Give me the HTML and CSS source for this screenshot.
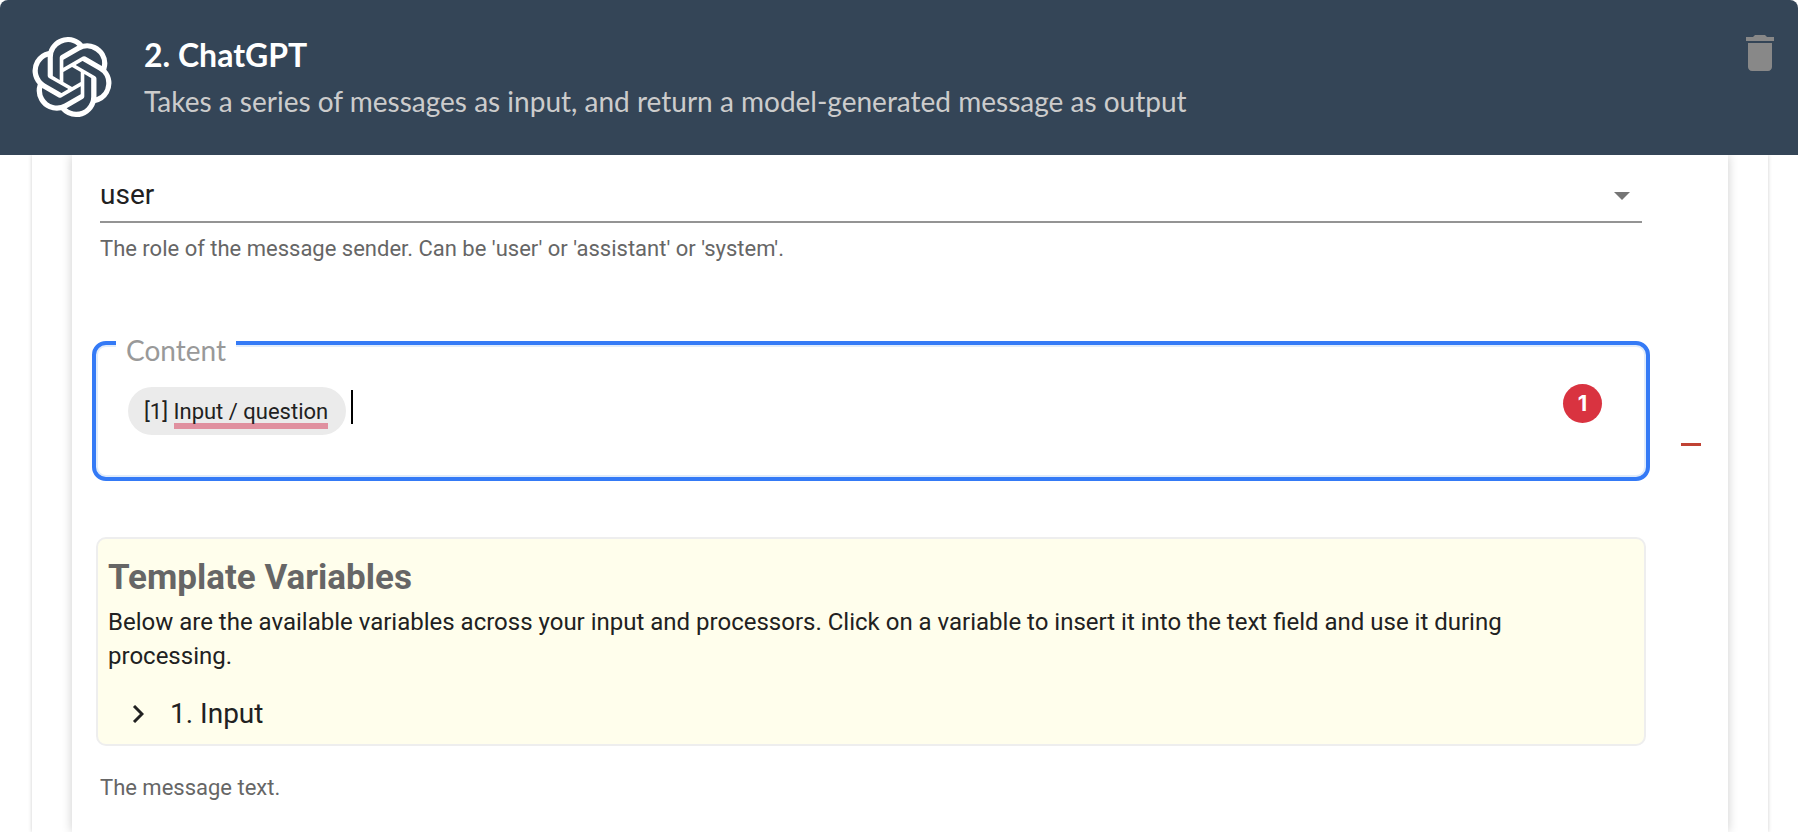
FILE: index.html
```html
<!DOCTYPE html>
<html lang="en">
<head>
<meta charset="utf-8">
<meta name="viewport" content="width=device-width, initial-scale=1">
<title>2. ChatGPT</title>
<link rel="stylesheet" href="styles.css">
</head>
<body>
<header class="step-header">
  <svg class="logo" viewBox="0 0 24 24" aria-hidden="true"><path fill="currentColor" d="M22.2819 9.8211a5.9847 5.9847 0 0 0-.5157-4.9108 6.0462 6.0462 0 0 0-6.5098-2.9A6.0651 6.0651 0 0 0 4.9807 4.1818a5.9847 5.9847 0 0 0-3.9977 2.9 6.0462 6.0462 0 0 0 .7427 7.0966 5.98 5.98 0 0 0 .511 4.9107 6.051 6.051 0 0 0 6.5146 2.9001A5.9847 5.9847 0 0 0 13.2599 24a6.0557 6.0557 0 0 0 5.7718-4.2058 5.9894 5.9894 0 0 0 3.9977-2.9001 6.0557 6.0557 0 0 0-.7475-7.0729zm-9.022 12.6081a4.4755 4.4755 0 0 1-2.8764-1.0408l.1419-.0804 4.7783-2.7582a.7948.7948 0 0 0 .3927-.6813v-6.7369l2.02 1.1686a.071.071 0 0 1 .038.0615v5.5826a4.504 4.504 0 0 1-4.4945 4.4944zm-9.6607-4.1254a4.4708 4.4708 0 0 1-.5346-3.0137l.142.0852 4.783 2.7582a.7712.7712 0 0 0 .7806 0l5.8428-3.3685v2.3324a.0804.0804 0 0 1-.0332.0615L9.74 19.9502a4.4992 4.4992 0 0 1-6.1408-1.6464zM2.3408 7.8956a4.485 4.485 0 0 1 2.3655-1.9728V11.6a.7664.7664 0 0 0 .3879.6765l5.8144 3.3543-2.0201 1.1685a.0757.0757 0 0 1-.071 0l-4.8303-2.7865A4.504 4.504 0 0 1 2.3408 7.872zm16.5963 3.8558L13.1038 8.364 15.1192 7.2a.0757.0757 0 0 1 .071 0l4.8303 2.7913a4.4944 4.4944 0 0 1-.6765 8.1042v-5.6772a.79.79 0 0 0-.407-.667zm2.0107-3.0231l-.142-.0852-4.7735-2.7818a.7759.7759 0 0 0-.7854 0L9.409 9.2297V6.8974a.0662.0662 0 0 1 .0284-.0615l4.8303-2.7866a4.4992 4.4992 0 0 1 6.6802 4.66zM8.3065 12.863l-2.02-1.1638a.0804.0804 0 0 1-.038-.0567V6.0742a4.4992 4.4992 0 0 1 7.3757-3.4537l-.142.0805L8.704 5.459a.7948.7948 0 0 0-.3927.6813zm1.0976-2.3654l2.602-1.4998 2.6069 1.4998v2.9994l-2.5974 1.4997-2.6067-1.4997Z"/></svg>
  <div class="heading">
    <h1 class="title">2. ChatGPT</h1>
    <p class="subtitle">Takes a series of messages as input, and return a model-generated message as output</p>
  </div>
  <button class="icon-button delete" type="button" aria-label="Delete step">
    <svg class="delete-icon" viewBox="5 3 14 18" aria-hidden="true"><path fill="currentColor" d="M6 19c0 1.1.9 2 2 2h8c1.1 0 2-.9 2-2V7H6v12zM19 4h-3.500l-1-1h-5l-1 1H5v2h14V4z"/></svg>
  </button>
</header>

<main class="outer-panel">
  <section class="inner-panel">
    <div class="fields">
      <div class="role-field">
        <div class="select-wrap">
          <select class="role-select" aria-label="Role" aria-describedby="role-help">
            <option selected>user</option>
            <option>assistant</option>
            <option>system</option>
          </select>
          <svg class="select-arrow" viewBox="0 0 16 8" aria-hidden="true"><path fill="currentColor" d="M0 0h16L8 8z"/></svg>
        </div>
        <p class="helper" id="role-help">The role of the message sender. Can be 'user' or 'assistant' or 'system'.</p>
      </div>

      <div class="content-field">
        <span class="content-label" id="content-label">Content</span>
        <div class="editor" role="textbox" tabindex="0" aria-labelledby="content-label" aria-describedby="content-help">
          <span class="chip">[1] <span class="misspelled">Input / question</span></span>
          <span class="caret"></span>
        </div>
        <span class="issue-count">1</span>
      </div>

      <div class="variables">
        <h2 class="variables-title">Template Variables</h2>
        <p class="variables-text">Below are the available variables across your input and processors. Click on a variable to insert it into the text field and use it during processing.</p>
        <button class="tree-item" type="button" aria-expanded="false">
          <svg class="chevron" viewBox="0 0 12 18" aria-hidden="true"><path fill="none" stroke="currentColor" stroke-width="3" d="M2 1l8 8-8 8"/></svg>
          <span>1. Input</span>
        </button>
      </div>
      <p class="helper" id="content-help">The message text.</p>
    </div>
    <button class="icon-button remove" type="button" aria-label="Remove message">
      <svg class="remove-icon" viewBox="0 0 20 3" aria-hidden="true"><path fill="currentColor" d="M0 0h20v3H0z"/></svg>
    </button>
  </section>
</main>
</body>
</html>
```

FILE: styles.css
```css
* {
  box-sizing: border-box;
}

body {
  margin: 0;
  min-height: 100vh;
  display: flex;
  flex-direction: column;
  background: #fff;
  color: #212121;
  font-family: Roboto, sans-serif;
}

h1,
h2,
p {
  margin: 0;
}

button {
  border: 0;
  padding: 0;
  background: none;
  color: inherit;
  font: inherit;
  cursor: pointer;
}

.step-header {
  position: relative;
  z-index: 1;
  display: flex;
  align-items: flex-start;
  gap: 32px;
  padding: 32px 24px 32px 32px;
  background: #344557;
  border-radius: 8px 8px 0 0;
  color: #fff;
  font-family: Lato, sans-serif;
}

.logo {
  flex: none;
  width: 80px;
  height: 80px;
  margin-top: 5px;
}

.heading {
  flex: 1;
}

.title {
  font-size: 32px;
  line-height: 46px;
  font-weight: 700;
}

.subtitle {
  padding-top: 1px;
  font-size: 28px;
  line-height: 44px;
  color: #ccc;
}

.icon-button {
  display: flex;
}

.delete {
  margin-top: 3px;
  color: #888;
}

.delete-icon {
  width: 28px;
  height: 36px;
}

.outer-panel {
  flex: 1;
  display: flex;
  margin: 0 30px 0 32px;
  padding: 0 40px;
  box-shadow: 0 0 4px rgba(0, 0, 0, 0.2);
}

.inner-panel {
  flex: 1;
  display: flex;
  justify-content: space-between;
  padding: 0 27px 16px 28px;
  box-shadow: 0 0 10px rgba(0, 0, 0, 0.2);
}

.fields {
  flex: 1;
}

.select-wrap {
  display: flex;
  align-items: center;
  padding-top: 12px;
  border-bottom: 2px solid #949494;
}

.role-select {
  flex: 1;
  height: 54px;
  margin-right: -28px;
  padding: 0 28px 0 0;
  appearance: none;
  border: 0;
  background: transparent;
  color: inherit;
  font: 28px Roboto, sans-serif;
}

.select-arrow {
  width: 16px;
  height: 8px;
  margin: 3px 12px 0 0;
  color: #757575;
  pointer-events: none;
}

.helper {
  padding-top: 9px;
  font-size: 22px;
  line-height: 34px;
  color: #666;
}

.content-field {
  position: relative;
  display: flex;
  align-items: flex-start;
  justify-content: space-between;
  min-height: 140px;
  margin: 75px -8px 0;
  padding: 39px 44px 39px 32px;
  border: 4px solid #347af6;
  border-radius: 14px;
  box-shadow: inset 0 0 0 2px #e0ecfb;
}

.content-label {
  position: absolute;
  top: -15px;
  left: 20px;
  padding: 0 10px;
  background: #fff;
  color: #999;
  font: 28px/40px Lato, sans-serif;
}

.editor {
  flex: 1;
  display: flex;
  gap: 5px;
  margin-top: 3px;
  outline: 0;
}

.chip {
  height: 48px;
  padding: 0 18px 0 16px;
  border-radius: 24px;
  background: #ebebeb;
  font-size: 22px;
  line-height: 50px;
  white-space: nowrap;
}

.misspelled {
  padding-bottom: 5px;
  background: linear-gradient(#e0909f, #e0909f) bottom / 100% 6px no-repeat;
}

.caret {
  width: 2px;
  height: 34px;
  margin-top: 3px;
  background: #000;
}

.issue-count {
  width: 39px;
  border-radius: 50%;
  background: #d93340;
  color: #fff;
  font: 700 22px/39px Inter, sans-serif;
  text-align: center;
}

.variables {
  margin: 56px -4px 16px;
  padding: 17px 10px 4px;
  border: 2px solid #eee;
  border-radius: 10px;
  background: #fffeec;
}

.variables-title {
  font-size: 35px;
  line-height: 44px;
  color: #666;
}

.variables-text {
  padding: 5px 80px 15px 0;
  font-size: 24px;
  line-height: 34px;
}

.tree-item {
  display: flex;
  align-items: center;
  gap: 26px;
  width: 100%;
  padding: 0 24px;
  font-size: 28px;
  line-height: 52px;
}

.chevron {
  width: 12px;
  height: 18px;
}

.remove {
  align-self: flex-start;
  margin: 276px -12px 0 27px;
  padding: 12px;
  color: #c04234;
}

.remove-icon {
  width: 20px;
  height: 3px;
}
```
